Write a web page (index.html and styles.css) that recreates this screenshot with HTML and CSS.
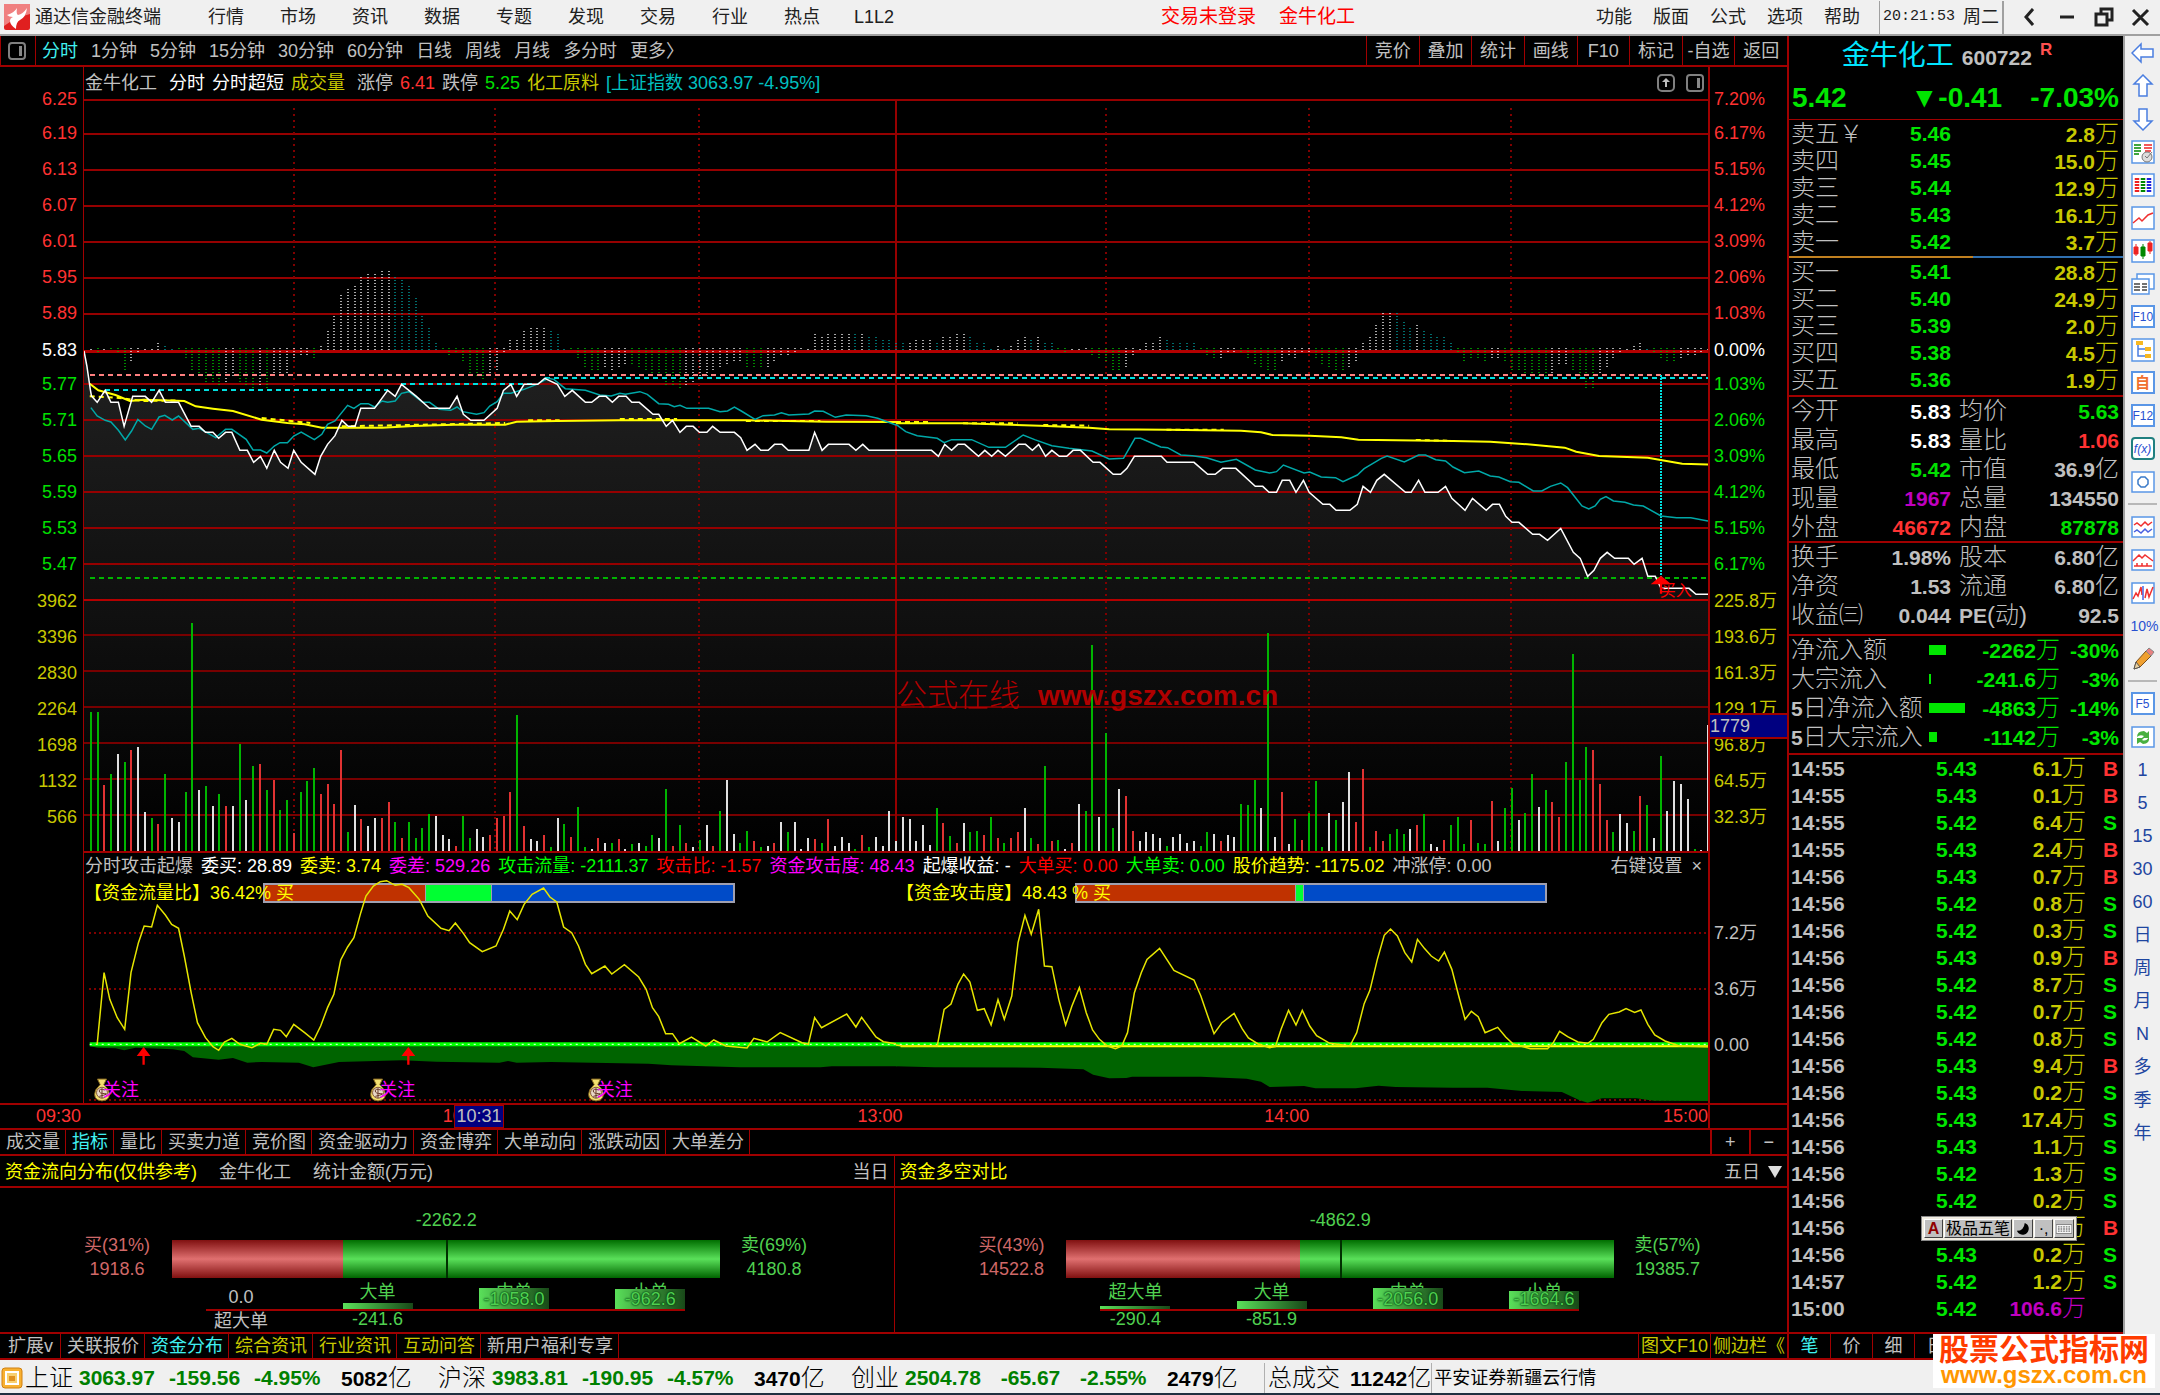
FILE: index.html
```html
<!DOCTYPE html>
<html lang="zh-CN">
<head>
<meta charset="utf-8">
<title>通达信金融终端 - 金牛化工 600722</title>
<link rel="stylesheet" href="styles.css">
</head>
<body>
<div class="app">
<header class="titlebar">
  <svg class="logo" viewBox="0 0 26 26"><rect width="26" height="26" rx="2" fill="#e02020"/><path d="M0 0h26v10q-14 3-26 12z" fill="#f08080"/><path d="M3 11q7-2 10-7-1 6 1 7 5-1 9-7-1 9-7 12-4 2-4 9-6-4-6-8 0-3 3-4-4 0-6-2z" fill="#fff"/></svg>
  <h1>通达信金融终端</h1>
  <nav class="menu">
    <button>行情</button><button>市场</button><button>资讯</button><button>数据</button><button>专题</button><button>发现</button><button>交易</button><button>行业</button><button>热点</button><button>L1L2</button>
  </nav>
  <p class="alert"><a href="#login">交易未登录</a><a href="#stock">金牛化工</a></p>
  <nav class="menu-right">
    <button>功能</button><button>版面</button><button>公式</button><button>选项</button><button>帮助</button>
  </nav>
  <p class="clock"><time>20:21:53</time><span>周二</span></p>
  <div class="win">
    <button aria-label="后退"><svg viewBox="0 0 20 20"><path d="M13 2L6 10l7 8" class="w"/></svg></button>
    <button aria-label="最小化"><svg viewBox="0 0 20 20"><path d="M3 10h14" class="w"/></svg></button>
    <button aria-label="还原"><svg viewBox="0 0 20 20"><path d="M2 7h11v11H2zM7 6V2h11v11h-4" class="w"/></svg></button>
    <button aria-label="关闭"><svg viewBox="0 0 20 20"><path d="M2 3l15 15M17 3L2 18" class="w"/></svg></button>
  </div>
</header>

<div class="body">
<main class="left">
  <div class="toolbar">
    <button class="dock" aria-label="侧栏"><svg viewBox="0 0 18 18"><rect x="1" y="1" width="16" height="16" rx="3" class="i"/><path d="M11 4h3v10h-3z" fill="#888"/></svg></button>
    <div class="periods">
      <button class="on">分时</button><button>1分钟</button><button>5分钟</button><button>15分钟</button><button>30分钟</button><button>60分钟</button><button>日线</button><button>周线</button><button>月线</button><button>多分时</button><button>更多〉</button>
    </div>
    <div class="tools">
      <button>竞价</button><button>叠加</button><button>统计</button><button>画线</button><button>F10</button><button>标记</button><button>-自选</button><button>返回</button>
    </div>
  </div>

  <section class="chart">
    <ul class="axis axis-l">
      <li>6.25</li><li>6.19</li><li>6.13</li><li>6.07</li><li>6.01</li><li>5.95</li><li>5.89</li><li class="wh">5.83</li><li class="gr">5.77</li><li class="gr">5.71</li><li class="gr">5.65</li><li class="gr">5.59</li><li class="gr">5.53</li><li class="gr">5.47</li><li class="ye">3962</li><li class="ye">3396</li><li class="ye">2830</li><li class="ye">2264</li><li class="ye">1698</li><li class="ye">1132</li><li class="ye">566</li>
    </ul>
    <div class="plots">
      <div class="legend">
        <span class="sp">金牛化工</span><span class="wh">分时</span><span class="wh">分时超短</span><span class="ye sp">成交量</span><span>涨停</span><span class="re">6.41</span><span>跌停</span><span class="gr">5.25</span><span class="ye">化工原料</span><span class="cy">[上证指数 3063.97 -4.95%]</span>
        <div class="legend-icons">
          <svg viewBox="0 0 18 18"><rect x="1" y="1" width="16" height="16" rx="4" class="i"/><path d="M9 4l4 4h-3v5H8V8H5z" fill="#bbb"/></svg>
          <svg viewBox="0 0 18 18"><rect x="1" y="1" width="16" height="16" rx="3" class="i"/><path d="M11 4h3v10h-3z" fill="#888"/></svg>
        </div>
      </div>
      <div class="pane price">
        <svg viewBox="0 -726 2834 1506" preserveAspectRatio="none">
          <defs><linearGradient id="fade" gradientUnits="userSpaceOnUse" x1="0" y1="100" x2="0" y2="780"><stop offset="0" stop-color="#1f1f1f"/><stop offset="1" stop-color="#101010"/></linearGradient></defs>
          <g id="area" fill="url(#fade)"></g>
          <path class="grid" d="M0-723H2834M0-622H2834M0-514H2834M0-406H2834M0-298H2834M0-190H2834M0-82H2834M0 130H2834M0 238H2834M0 346H2834M0 454H2834M0 562H2834M0 670H2834M1417-726V780"/>
          <path class="grid vdots" d="M366-700V780M718-700V780M1074-700V780M1783-700V780M2138-700V780M2491-700V780"/>
          <path class="base" d="M0 30H2834M0 777H2834"/>
          <g id="hist"></g>
          <path class="dash pink" d="M10 103H2834"/>
          <path class="dash aqua" d="M37 148H530M554 130H785M804 112H2834"/>
          <path class="dash lime" d="M10 711H2834"/>
          <path class="dots aqua" d="M2752 103V740"/>
          <g class="avg">
            <path transform="translate(-145)" d="M155 128L170 148 200 162 225 180 250 176 320 180 340 196 370 203 405 210 455 236 500 246 530 250 560 260 665 260 720 255 790 251 880 251 900 242 970 240 1080 238 1300 238 1440 242 1562 243"/>
            <path transform="translate(1389)" d="M28 247L145 247 280 254 365 260 400 265 500 266 630 269 665 274 685 282 750 284 805 289 835 296 1000 300 1065 302 1130 310 1195 320 1215 332 1255 345 1340 350 1370 359 1400 368 1447 371"/>
            <path class="avg-dots" transform="translate(-145)" d="M155 166L200 170 250 180 310 178M455 231L540 246M595 256L880 246M920 238L975 238M1080 234L1180 234M1300 240L1430 240"/>
            <path class="avg-dots" transform="translate(1389)" d="M28 243L90 243M145 247L240 247M285 252L365 254M500 266L600 266M935 297L990 299"/>
          </g>
          <g class="line index">
            <path transform="translate(-145)" d="M157 200L168 225 182 238 192 243 205 268 217 297 228 270 239 235 252 255 263 265 276 228 286 223 299 237 310 225 335 265 346 262 375 290 392 265 403 265 428 295 440 327 453 327 464 336 477 315 487 305 500 305 511 285 524 273 547 296 560 280 570 250 583 240 605 193 616 202 628 188 641 188 652 198 665 180 675 184 688 180 699 157 712 152 736 184 748 184 765 205 785 208 796 198 806 212 830 220 843 215 853 195 866 182 877 157 890 157 913 145 935 130 955 112 965 115 985 143 1020 148 1045 162 1065 165 1080 157 1090 160 1115 152 1128 160 1148 188 1165 190 1175 197 1185 193 1197 202 1235 202 1255 212 1268 210 1280 198 1292 210 1316 235 1330 224 1350 222 1362 215 1375 222 1410 219 1420 210 1435 211 1456 229 1475 222 1510 224 1530 232 1562 252"/>
            <path transform="translate(1389)" d="M28 250L45 272 65 284 100 292 112 305 125 296 160 296 190 319 219 319 250 282 270 296 300 314 330 322 370 330 400 354 425 352 445 292 455 292 490 318 502 320 525 342 545 344 570 350 595 364 622 355 655 387 680 396 692 392 704 372 740 396 750 393 770 408 795 410 808 422 833 402 845 383 875 352 885 345 915 363 940 342 952 342 970 356 987 360 1000 378 1020 395 1045 390 1065 405 1080 408 1100 422 1115 424 1140 450 1155 450 1170 436 1188 426 1200 440 1225 495 1237 504 1248 495 1257 475 1267 467 1280 480 1300 484 1315 492 1332 495 1363 525 1390 530 1415 530 1445 540"/>
          </g>
          <g id="last" class="line last">
            <path transform="translate(-145)" d="M145 30L150 75 156 145 158 165 168 184 182 148 192 184 205 184 215 256 230 166 252 166 263 184 276 148 287 184 310 184 332 256 346 256 357 274 370 274 380 292 392 274 403 274 417 328 430 328 441 364 453 346 464 382 477 328 488 364 501 382 511 328 524 364 548 400 558 346 570 310 583 284 595 238 606 256 618 256 628 202 652 202 675 148 688 166 699 130 725 166 748 202 783 202 796 166 807 220 820 238 843 238 866 202 877 148 890 130 900 166 913 130 937 130 949 112 971 130 984 166 997 148 1020 184 1031 184 1044 166 1056 166 1067 184 1078 166 1091 166 1101 184 1114 184 1138 220 1148 220 1161 256 1172 238 1185 274 1196 256 1208 256 1219 274 1232 274 1242 256 1255 274 1280 274 1291 290 1302 328 1316 310 1326 328 1339 328 1350 310 1363 310 1374 328 1410 328 1420 274 1433 328 1444 310 1480 310 1492 328 1504 310 1515 328 1562 328"/>
            <path transform="translate(1389)" d="M28 328L90 328 102 346 113 310 125 328 136 310 148 310 172 346 183 328 195 346 206 328 219 346 242 310 254 310 266 328 277 310 289 346 300 328 313 346 326 346 337 328 350 328 372 364 384 364 407 400 420 400 431 382 444 346 491 346 501 364 548 364 572 400 585 400 598 382 621 382 655 436 668 436 679 454 692 454 702 418 715 418 726 454 739 418 749 454 773 490 785 490 796 508 820 508 833 490 843 436 856 454 867 418 880 400 917 454 927 454 940 418 951 454 974 454 987 436 998 472 1021 508 1034 472 1058 508 1069 490 1081 490 1092 526 1103 544 1115 544 1139 580 1151 580 1165 598 1188 562 1210 634 1222 652 1235 706 1246 688 1257 652 1269 634 1282 652 1306 652 1316 670 1330 652 1340 706 1353 706 1363 742 1412 742 1424 760 1447 760"/>
          </g>
          <path d="M2734 730L2752 704 2770 730H2754V758H2750V730z" fill="#f00"/>
        </svg>
        <span class="buy-mark">买入</span>
      </div>
      <div class="pane volume">
        <svg viewBox="0 0 2834 750" preserveAspectRatio="none">
          <path class="grid dim" d="M0 102H2834M0 210H2834M0 318H2834M0 426H2834M0 534H2834M0 642H2834"/>
          <path class="grid" d="M1417 0V750"/>
          <path class="grid vdots" d="M366 0V750M718 0V750M1074 0V750M1783 0V750M2138 0V750M2491 0V750"/>
          <g id="vol"></g>
        </svg>
        <p class="stamp"><span>公式在线</span><b>www.gszx.com.cn</b></p>
      </div>
      <div class="pane flow-pane">
        <div class="legend ind">
          <span>分时攻击起爆</span><span class="wh">委买: 28.89</span><span class="yb">委卖: 3.74</span><span class="ma">委差: 529.26</span><span class="gb">攻击流量: -2111.37</span><span class="rb">攻击比: -1.57</span><span class="ma">资金攻击度: 48.43</span><span class="wh">起爆收益: -</span><span class="rb">大单买: 0.00</span><span class="gb">大单卖: 0.00</span><span class="yb">股价趋势: -1175.02</span><span>冲涨停: 0.00</span>
          <button class="set">右键设置</button><button class="x" aria-label="关闭指标">×</button>
        </div>
        <div class="gauges">
          <div class="gauge"><div class="track"><i class="buy" style="width:34.3%"></i><i class="mid" style="width:14.2%"></i></div><span>【资金流量比】36.42% 买</span></div>
          <div class="gauge"><div class="track"><i class="buy" style="width:46.5%"></i><i class="mid" style="width:2%"></i></div><span>【资金攻击度】48.43 % 买</span></div>
        </div>
        <svg class="ind-plot" viewBox="0 21 2834 750" preserveAspectRatio="none">
          <path class="grid hdots" d="M8 262H2834M8 429H2834M8 763H2834"/>
          <g fill="#006400">
            <path transform="translate(-145)" d="M155 596L155 600 168 605 200 607 215 613 235 605 300 610 320 615 335 634 380 641 405 636 430 650 455 648 520 650 545 664 590 648 700 643 760 647 870 650 885 645 900 650 960 648 1130 653 1170 658 1290 664 1430 664 1450 661 1564 661V596z"/>
            <path transform="translate(1389)" d="M28 596L28 661 95 664 280 665 355 670 372 686 400 697 430 696 440 692 560 692 640 698 665 707 680 723 740 720 760 727 830 727 870 719 900 723 1000 725 1060 725 1120 735 1190 738 1220 762 1235 770 1260 757 1320 757 1350 764 1447 765V596z"/>
          </g>
          <path class="zero" d="M10 595H2834"/>
          <path class="zero-dots" d="M10 595H2834"/>
          <path class="floor" d="M1425 601H2834"/>
          <g class="line flow-line">
            <path transform="translate(-145)" d="M168 595L180 380 190 460 203 515 216 550 227 380 240 290 250 240 263 243 273 178 287 207 298 235 310 247 320 330 332 440 343 530 357 575 370 602 380 613 390 588 403 577 417 595 438 605 453 592 464 595 476 550 488 553 498 572 511 535 530 560 546 582 558 540 570 485 581 445 593 342 605 303 616 275 628 200 637 150 650 120 662 107 673 104 688 118 700 115 712 125 730 160 745 210 768 247 782 254 793 231 807 262 818 290 840 317 864 300 877 250 888 195 901 221 913 175 927 145 947 126 958 153 970 168 982 243 996 260 1008 300 1020 355 1031 383 1054 360 1066 384 1088 356 1113 393 1126 430 1137 485 1148 512 1160 563 1172 563 1184 593 1205 573 1230 600 1244 582 1265 600 1302 606 1314 577 1337 588 1360 560 1398 590 1409 595 1420 515 1432 545 1476 504 1492 543 1502 514 1527 573 1540 587 1562 593"/>
            <path transform="translate(1389)" d="M28 597L40 600 100 600 112 490 124 474 136 415 146 384 157 408 170 493 182 488 194 537 206 461 217 520 230 450 241 290 253 208 264 265 277 190 287 360 300 362 312 460 324 537 335 480 348 425 360 500 371 552 383 580 397 600 411 608 422 600 432 560 444 440 456 380 466 340 488 307 513 373 548 402 560 450 572 510 583 563 597 530 618 502 632 548 643 576 660 594 680 605 690 602 700 550 713 493 726 537 737 493 750 540 762 569 785 592 820 600 832 560 845 473 855 433 868 340 880 268 891 249 903 270 916 320 928 348 938 280 950 307 962 330 975 345 985 318 998 370 1010 450 1021 520 1032 496 1044 512 1056 560 1078 544 1092 573 1105 594 1135 608 1165 608 1175 590 1186 556 1200 572 1218 588 1235 592 1245 580 1260 530 1272 505 1290 498 1302 488 1317 499 1328 492 1340 535 1352 567 1370 585 1395 600 1447 602"/>
          </g>
          <path d="M92 630L104 603 116 630H106V656H102V630zM554 630L566 603 578 630H568V656H564V630z" fill="#f00"/>
        </svg>
        <span class="note" style="left:0.5%"><svg viewBox="0 0 22 26"><g id="bag"><path d="M6 1h10l-3 6 5 6q4 11-7 12-11-1-7-12l5-6z" fill="#f2e070" stroke="#8a6a20"/><circle cx="11" cy="16" r="6" fill="#e8d8c8" stroke="#7a4a30"/><path d="M14 13q-6-2-6 1t6 3-6 3M11 11v11" fill="none" stroke="#6a3a28"/></g></svg>关注</span>
        <span class="note" style="left:17.5%"><svg viewBox="0 0 22 26"><use href="#bag"/></svg>关注</span>
        <span class="note" style="left:30.9%"><svg viewBox="0 0 22 26"><use href="#bag"/></svg>关注</span>
      </div>
    </div>
    <div class="axis-col">
      <ul class="axis axis-r">
        <li>7.20%</li><li>6.17%</li><li>5.15%</li><li>4.12%</li><li>3.09%</li><li>2.06%</li><li>1.03%</li><li class="wh">0.00%</li><li class="gr">1.03%</li><li class="gr">2.06%</li><li class="gr">3.09%</li><li class="gr">4.12%</li><li class="gr">5.15%</li><li class="gr">6.17%</li><li class="ye">225.8万</li><li class="ye">193.6万</li><li class="ye">161.3万</li><li class="ye">129.1万</li><li class="ye">96.8万</li><li class="ye">64.5万</li><li class="ye">32.3万</li>
      </ul>
      <ul class="axis axis-i"><li>7.2万</li><li>3.6万</li><li>0.00</li></ul>
      <span class="cursor-y">1779</span>
    </div>
  </section>

  <div class="times">
    <span>09:30</span><span>10:30</span><span>13:00</span><span>14:00</span><span>15:00</span><i></i>
    <b class="cursor-x">10:31</b>
  </div>

  <div class="tabs">
    <button>成交量</button><button class="on">指标</button><button>量比</button><button>买卖力道</button><button>竞价图</button><button>资金驱动力</button><button>资金博弈</button><button>大单动向</button><button>涨跌动因</button><button>大单差分</button>
    <div class="zoomers"><button aria-label="放大">+</button><button aria-label="缩小">−</button></div>
  </div>

  <div class="funds">
    <section class="fund">
      <header><h2>资金流向分布(仅供参考)</h2><span>金牛化工</span><span>统计金额(万元)</span><button>当日</button></header>
      <div class="fund-body">
        <p class="net">-2262.2</p>
        <p class="side in">买(31%)<br>1918.6</p>
        <div class="bar"><i style="width:31.2%"></i></div>
        <p class="side out">卖(69%)<br>4180.8</p>
        <ol class="sizes">
          <li class="flat"><em>0.0</em><span>超大单</span></li>
          <li><span>大单</span><i style="height:6px"></i><em>-241.6</em></li>
          <li class="tall"><span>中单</span><i style="height:21px"></i><em>-1058.0</em></li>
          <li class="tall"><span>小单</span><i style="height:20px"></i><em>-962.6</em></li>
        </ol>
      </div>
    </section>
    <section class="fund">
      <header><h2>资金多空对比</h2><button>五日 <svg viewBox="0 0 14 12"><path d="M0 0h14L7 12z" fill="#ddd"/></svg></button></header>
      <div class="fund-body">
        <p class="net">-4862.9</p>
        <p class="side in">买(43%)<br>14522.8</p>
        <div class="bar"><i style="width:42.6%"></i></div>
        <p class="side out">卖(57%)<br>19385.7</p>
        <ol class="sizes">
          <li><span>超大单</span><i style="height:3px"></i><em>-290.4</em></li>
          <li><span>大单</span><i style="height:8px"></i><em>-851.9</em></li>
          <li class="tall"><span>中单</span><i style="height:21px"></i><em>-2056.0</em></li>
          <li class="tall"><span>小单</span><i style="height:18px"></i><em>-1664.6</em></li>
        </ol>
      </div>
    </section>
  </div>

  <div class="tabs low">
    <button>扩展v</button><button>关联报价</button><button class="on">资金分布</button><button class="ye">综合资讯</button><button class="ye">行业资讯</button><button class="ye">互动问答</button><button>新用户福利专享</button>
    <div class="low-right"><button class="ye">图文F10</button><button class="ye">侧边栏《</button></div>
  </div>
</main>

<aside class="quote">
  <header class="q-name"><h2>金牛化工</h2><b>600722</b><sup>R</sup></header>
  <p class="q-last"><b>5.42</b><b>▼-0.41</b><b>-7.03%</b></p>
  <table class="book">
    <tbody>
      <tr><th>卖五￥</th><td>5.46</td><td><b>2.8</b>万</td></tr>
      <tr><th>卖四</th><td>5.45</td><td><b>15.0</b>万</td></tr>
      <tr><th>卖三</th><td>5.44</td><td><b>12.9</b>万</td></tr>
      <tr><th>卖二</th><td>5.43</td><td><b>16.1</b>万</td></tr>
      <tr><th>卖一</th><td>5.42</td><td><b>3.7</b>万</td></tr>
    </tbody>
  </table>
  <div class="ratio"><i style="width:55%"></i></div>
  <table class="book">
    <tbody>
      <tr><th>买一</th><td>5.41</td><td><b>28.8</b>万</td></tr>
      <tr><th>买二</th><td>5.40</td><td><b>24.9</b>万</td></tr>
      <tr><th>买三</th><td>5.39</td><td><b>2.0</b>万</td></tr>
      <tr><th>买四</th><td>5.38</td><td><b>4.5</b>万</td></tr>
      <tr><th>买五</th><td>5.36</td><td><b>1.9</b>万</td></tr>
    </tbody>
  </table>
  <table class="stats">
    <tbody>
      <tr><th>今开</th><td class="wh"><b>5.83</b></td><th>均价</th><td class="gr"><b>5.63</b></td></tr>
      <tr><th>最高</th><td class="wh"><b>5.83</b></td><th>量比</th><td class="re"><b>1.06</b></td></tr>
      <tr><th>最低</th><td class="gr"><b>5.42</b></td><th>市值</th><td><b>36.9</b>亿</td></tr>
      <tr><th>现量</th><td class="pu"><b>1967</b></td><th>总量</th><td><b>134550</b></td></tr>
      <tr><th>外盘</th><td class="re"><b>46672</b></td><th>内盘</th><td class="gr"><b>87878</b></td></tr>
    </tbody>
  </table>
  <table class="stats three">
    <tbody>
      <tr><th>换手</th><td><b>1.98%</b></td><th>股本</th><td><b>6.80</b>亿</td></tr>
      <tr><th>净资</th><td><b>1.53</b></td><th>流通</th><td><b>6.80</b>亿</td></tr>
      <tr><th>收益㈢</th><td><b>0.044</b></td><th class="pe"><b>PE</b>(动)</th><td><b>92.5</b></td></tr>
    </tbody>
  </table>
  <table class="netflow">
    <tbody>
      <tr><th>净流入额</th><td><i style="width:17px"></i></td><td><b>-2262</b>万</td><td><b>-30%</b></td></tr>
      <tr><th>大宗流入</th><td><i style="width:2px"></i></td><td><b>-241.6</b>万</td><td><b>-3%</b></td></tr>
      <tr><th><b>5</b>日净流入额</th><td><i style="width:36px"></i></td><td><b>-4863</b>万</td><td><b>-14%</b></td></tr>
      <tr><th><b>5</b>日大宗流入</th><td><i style="width:8px"></i></td><td><b>-1142</b>万</td><td><b>-3%</b></td></tr>
    </tbody>
  </table>
  <div class="ticks-wrap">
  <table class="ticks">
    <tbody>
      <tr><td>14:55</td><td>5.43</td><td>6.1<s>万</s></td><td class="b">B</td></tr>
      <tr><td>14:55</td><td>5.43</td><td>0.1<s>万</s></td><td class="b">B</td></tr>
      <tr><td>14:55</td><td>5.42</td><td>6.4<s>万</s></td><td>S</td></tr>
      <tr><td>14:55</td><td>5.43</td><td>2.4<s>万</s></td><td class="b">B</td></tr>
      <tr><td>14:56</td><td>5.43</td><td>0.7<s>万</s></td><td class="b">B</td></tr>
      <tr><td>14:56</td><td>5.42</td><td>0.8<s>万</s></td><td>S</td></tr>
      <tr><td>14:56</td><td>5.42</td><td>0.3<s>万</s></td><td>S</td></tr>
      <tr><td>14:56</td><td>5.43</td><td>0.9<s>万</s></td><td class="b">B</td></tr>
      <tr><td>14:56</td><td>5.42</td><td>8.7<s>万</s></td><td>S</td></tr>
      <tr><td>14:56</td><td>5.42</td><td>0.7<s>万</s></td><td>S</td></tr>
      <tr><td>14:56</td><td>5.42</td><td>0.8<s>万</s></td><td>S</td></tr>
      <tr><td>14:56</td><td>5.43</td><td>9.4<s>万</s></td><td class="b">B</td></tr>
      <tr><td>14:56</td><td>5.43</td><td>0.2<s>万</s></td><td>S</td></tr>
      <tr><td>14:56</td><td>5.43</td><td>17.4<s>万</s></td><td>S</td></tr>
      <tr><td>14:56</td><td>5.43</td><td>1.1<s>万</s></td><td>S</td></tr>
      <tr><td>14:56</td><td>5.42</td><td>1.3<s>万</s></td><td>S</td></tr>
      <tr><td>14:56</td><td>5.42</td><td>0.2<s>万</s></td><td>S</td></tr>
      <tr><td>14:56</td><td></td><td><s>万</s></td><td class="b">B</td></tr>
      <tr><td>14:56</td><td>5.43</td><td>0.2<s>万</s></td><td>S</td></tr>
      <tr><td>14:57</td><td>5.42</td><td>1.2<s>万</s></td><td>S</td></tr>
      <tr><td>15:00</td><td>5.42</td><td class="pu">106.6<s>万</s></td><td></td></tr>
    </tbody>
  </table>
  <div class="ime">
    <button class="a">A</button><button>极品五笔</button><button aria-label="半角"><svg viewBox="0 0 16 16"><path d="M10 1a7 7 0 1 1-9 9q8 0 9-9z" fill="#000"/></svg></button><button>·,</button><button aria-label="键盘"><svg viewBox="0 0 18 16"><rect y="3" width="18" height="10" fill="#fff" stroke="#777"/><path d="M2 5.500h14M2 8h14M2 10.500h14" stroke="#777" stroke-width="1.500" stroke-dasharray="2 1"/></svg></button>
  </div>
  </div>
  <nav class="q-tabs"><button class="on">笔</button><button>价</button><button>细</button><button>日</button><span></span><span></span><span></span><span></span></nav>
</aside>

<nav class="rail">
  <button aria-label="后退"><svg viewBox="0 0 24 24"><path d="M1 12l9-9v5h12v8H10v5z" fill="#fff" stroke="#4a7ee0" stroke-width="1.500"/></svg></button>
  <button aria-label="上"><svg viewBox="0 0 24 24"><path d="M12 1l9 9h-5v12H8V10H3z" fill="#fff" stroke="#4a7ee0" stroke-width="1.500"/></svg></button>
  <button aria-label="下"><svg viewBox="0 0 24 24"><path d="M12 23l9-9h-5V2H8v12H3z" fill="#fff" stroke="#4a7ee0" stroke-width="1.500"/></svg></button>
  <button aria-label="报价"><svg viewBox="0 0 24 24"><rect x="1" y="1" width="22" height="22" class="f"/><path d="M3 5h7M3 8h7M3 11h7M3 14h5" stroke="#080" stroke-width="1.500"/><path d="M13 5h8M13 8h8M14 11h6" stroke="#e22" stroke-width="1.500"/><circle cx="16" cy="17" r="5" fill="#ddd" stroke="#777"/><path d="M14 16l2 2 5-6" stroke="#777" fill="none"/></svg></button>
  <button aria-label="列表"><svg viewBox="0 0 24 24"><rect x="1" y="1" width="22" height="22" class="f"/><g fill="none" stroke-width="4.500" stroke-dasharray="2 1"><path d="M6 5v15" stroke="#e22"/><path d="M12 5v15" stroke="#080"/><path d="M18 5v15" stroke="#22d"/></g></svg></button>
  <button aria-label="走势"><svg viewBox="0 0 24 24"><rect x="1" y="1" width="22" height="22" class="f"/><path d="M2 17l6-5 3 3 6-6 5-2" class="r"/></svg></button>
  <button aria-label="K线"><svg viewBox="0 0 24 24"><rect x="1" y="1" width="22" height="22" class="f"/><path d="M3 8h4v7H3zM5 5v12M17 4h4v8h-4zM19 2v13" fill="#e22" stroke="#e22"/><path d="M10 8h4v9h-4zM12 5v15" fill="#080" stroke="#080"/></svg></button>
  <button aria-label="多窗"><svg viewBox="0 0 24 24"><rect x="6" y="2" width="17" height="15" class="f"/><rect x="1" y="7" width="17" height="15" class="f"/><path d="M3 12h6M3 15h6M3 18h6M11 12h5M11 15h5M11 18h5" stroke="#444" stroke-width="1.500"/></svg></button>
  <button class="t">F10</button>
  <button aria-label="树"><svg viewBox="0 0 24 24"><rect x="1" y="1" width="22" height="22" class="f"/><path d="M7 6v12h7M7 11h7" stroke="#4a7ee0" fill="none" stroke-width="1.500"/><path d="M5 3h7v4H5zM14 9h6v4h-6zM14 16h6v4h-6z" fill="#f8b820"/></svg></button>
  <button class="t zi">自</button>
  <button class="t">F12</button>
  <button class="t fx">f(x)</button>
  <button aria-label="圆"><svg viewBox="0 0 24 24"><rect x="1" y="2" width="22" height="20" class="f"/><path d="M10 7h4l3 3v4l-3 3h-4l-3-3v-4z" fill="none" stroke="#3a7ac8" stroke-width="1.500"/></svg></button>
  <hr>
  <button aria-label="叠加"><svg viewBox="0 0 24 24"><rect x="1" y="2" width="22" height="20" class="f"/><path d="M3 10l3-2 4 3 4-4 3 3 4-3" class="r"/><path d="M3 17l3-2 4 3 4-4 3 3 4-3" class="u"/></svg></button>
  <button aria-label="副图"><svg viewBox="0 0 24 24"><rect x="1" y="2" width="22" height="20" class="f"/><path d="M2 13l6-6 3 3 3-3 8 6M3 18h18M6 15v3M11 15v3M16 15v3" class="r"/></svg></button>
  <button aria-label="波动"><svg viewBox="0 0 24 24"><rect x="1" y="2" width="22" height="20" class="f"/><path d="M2 18l3-6 2 3 3-9 1 8M14 17l2-9 2 8 4-10" class="r"/><path d="M12 5v14" class="u"/></svg></button>
  <button class="t pct">10%</button>
  <button aria-label="画笔"><svg viewBox="0 0 24 24"><path d="M3 22l2-7L15 4l5 5L9 20z" fill="#f0a030" stroke="#7a5020"/><path d="M15 4l3-3 5 4-3 4z" fill="#e88080" stroke="#888"/><path d="M3 22l2-7 4 5z" fill="#e8d0a0" stroke="#555"/></svg></button>
  <hr>
  <button class="t">F5</button>
  <button aria-label="刷新"><svg viewBox="0 0 24 24"><rect x="1" y="2" width="22" height="20" class="f"/><path d="M6 12q0-6 7-6l3 2 2-2v7h-7l2-2q-4-2-7 1zM18 12q1 7-6 7l-3-2-3 2v-6h7l-2 2q4 2 7-3z" fill="#48b040"/></svg></button>
  <button>1</button><button>5</button><button>15</button><button>30</button><button>60</button><button>日</button><button>周</button><button>月</button><button>N</button><button>多</button><button>季</button><button>年</button>
</nav>
</div>

<footer class="status">
  <svg class="coin" viewBox="0 0 22 22"><rect x="1" y="1" width="20" height="20" rx="3" fill="#f8b030" stroke="#d08010"/><rect x="5" y="5" width="12" height="12" fill="#f8d070" stroke="#fff" stroke-width="2"/><rect x="8" y="9" width="6" height="5" fill="#e09020"/></svg>
  <p class="idx"><span>上证</span><b>3063.97</b><b>-159.56</b><b>-4.95%</b><span><strong>5082</strong>亿</span></p>
  <p class="idx"><span>沪深</span><b>3983.81</b><b>-190.95</b><b>-4.57%</b><span><strong>3470</strong>亿</span></p>
  <p class="idx"><span>创业</span><b>2504.78</b><b>-65.67</b><b>-2.55%</b><span><strong>2479</strong>亿</span></p>
  <p class="total"><span>总成交</span><span><strong>11242</strong>亿</span></p>
  <p class="server">平安证券新疆云行情</p>
</footer>
<div class="brand"><strong>股票公式指标网</strong><b>www.gszx.com.cn</b></div>
</div>
<script src="chart.js"></script>
</body>
</html>
```

FILE: styles.css
```css
* { box-sizing: border-box; }
body { margin: 0; background: #000; color: #c0c0c0; font: 400 18px/24px "Liberation Sans", "Noto Sans CJK SC", sans-serif; }
h1, h2, p, ul, ol { margin: 0; padding: 0; font-size: inherit; font-weight: inherit; list-style: none; }
button { background: none; border: 0; padding: 0; margin: 0; font: inherit; color: inherit; white-space: nowrap; }
a { color: inherit; text-decoration: none; }
b, strong { font-weight: 700; }
i, em { font-style: normal; }
s { text-decoration: none; }
svg { display: block; }
.wh { color: #fff; }
.gr { color: #00e000; }
.re { color: #ff3232; }
.ye { color: #c8c800; }
.cy { color: #00c0c0; }
.pu { color: #c000c0; }
.ma { color: #f0f; }
.yb { color: #ff0; }
.gb { color: #0f0; }
.rb { color: #f00; }

.app { position: relative; min-height: 100vh; display: flex; flex-direction: column; }
.titlebar { display: flex; align-items: center; height: 36px; background: #f0f0f0; border-bottom: 2px solid #a0a0a0; color: #202020; }
.logo { width: 26px; height: 26px; margin: 0 5px 0 4px; }
.menu { display: flex; margin-left: 29px; }
.menu button { width: 72px; }
.alert { display: flex; gap: 23px; margin-left: 251px; color: #f00; font-size: 19px; }
.menu-right { display: flex; gap: 21px; margin-left: auto; padding-right: 19px; }
.clock { display: flex; gap: 8px; height: 33px; padding: 0 3px; align-items: center; border: 1px solid #a0a0a0; border-width: 0 2px 0 1px; }
.clock time { font: 15px/24px "Liberation Mono", monospace; }
.win { display: flex; gap: 17px; padding: 0 9px 0 16px; }
.win svg { width: 20px; height: 20px; }
.w { fill: none; stroke: #222; stroke-width: 3; }
.i { fill: none; stroke: #808080; stroke-width: 2; }

.body { display: grid; grid-template-columns: minmax(0, 1fr) 336px 37px; }
.left { display: flex; flex-direction: column; min-width: 0; }
.toolbar { display: flex; height: 31px; border-bottom: 2px solid #a00000; }
.dock { width: 36px; padding-left: 7px; border: 1px solid #a00000; border-width: 0 1px; }
.dock svg { width: 18px; height: 18px; }
.periods { display: flex; align-items: center; gap: 13px; padding-left: 6px; }
.on { color: #40f0f0; }
.tools { display: grid; grid-template-columns: repeat(8, 1fr); width: 421px; margin-left: auto; }
.tools button { border-left: 1px solid #a00000; }

.chart { display: grid; grid-template-columns: 83px minmax(0, 1fr) 77px; }
.plots { border: 1px solid #a00000; border-width: 0 2px 0 1px; min-width: 0; }
.axis { display: grid; color: #ff3232; line-height: 28px; }
.axis-l, .axis-r { grid-template-rows: 34px repeat(5, 36px) 37px 34px repeat(5, 36px) 37px repeat(6, 36px) 28px; align-content: start; }
.axis-l { padding-top: 18px; padding-right: 6px; text-align: right; }
.axis-r { padding-top: 18px; padding-left: 4px; }
.axis-col { position: relative; }
.axis-i { grid-template-rows: 56px 56px 28px; margin-top: 88px; padding-left: 4px; color: #c0c0c0; }
.cursor-y { position: absolute; left: 0; right: 0; top: 646px; height: 26px; line-height: 22px; background: #000080; border: 1px solid #a00000; border-width: 2px 0; }
.legend { display: flex; align-items: center; gap: 7px; height: 32px; padding-left: 1px; white-space: nowrap; }
.sp { margin-right: 5px; }
.legend-icons { display: flex; gap: 11px; margin: 0 4px 0 auto; }
.legend-icons svg { width: 18px; height: 18px; }
.pane { position: relative; }
.pane > svg { width: 100%; }
.price > svg { height: 502px; }
.volume { background: linear-gradient(#111, #000); }
.volume > svg { height: 250px; }
.pane path { vector-effect: non-scaling-stroke; }
.grid { fill: none; stroke: #960000; stroke-width: 2; shape-rendering: crispEdges; }
.dim { stroke: #780000; }
.vdots { stroke-dasharray: 2 4; stroke: #800000; }
.hdots { stroke-dasharray: 2 3; stroke: #800000; }
.base { stroke: #b40000; stroke-width: 3; shape-rendering: crispEdges; }
.dash { stroke-width: 2; stroke-dasharray: 5 4; shape-rendering: crispEdges; }
.dots { stroke-width: 2; stroke-dasharray: 2 1; shape-rendering: crispEdges; }
.pink { stroke: #ff8080; }
.aqua { stroke: #00e0e0; }
.lime { stroke: #00b400; }
.line { fill: none; stroke-width: 1.500; }
.last { stroke: #fff; }
.index { stroke: #00a8a8; }
.flow-line { stroke: #e6e600; }
.avg { fill: none; stroke: #ff0; stroke-width: 2; }
.avg-dots { stroke-width: 2; stroke-dasharray: 5 4; }
.bars { fill: none; stroke-width: 2; shape-rendering: crispEdges; }
.faint { stroke-dasharray: 1 2; opacity: 0.75; }
.c-w { stroke: #e0e0e0; }
.c-g { stroke: #00b400; }
.c-r { stroke: #e03232; }
.c-c { stroke: #009090; }
.buy-mark { position: absolute; right: 1%; bottom: 0; color: #f00; font-size: 16px; line-height: 20px; }
.stamp { position: absolute; left: 50%; top: 76px; display: flex; gap: 18px; color: #b00000; font-size: 31px; font-weight: 300; line-height: 38px; white-space: pre; }
.stamp b { font-size: 28px; }
.flow-pane { display: grid; grid-template-rows: 26px 28px 196px; border-top: 2px solid #a00000; }
.ind { grid-area: 1 / 1; height: 26px; gap: 8px; }
.set { margin-left: auto; }
.x { margin: 0 6px 0 1px; }
.gauges { grid-area: 2 / 1; display: grid; grid-template-columns: 1fr 1fr; color: #ff0; }
.gauge { display: grid; align-items: center; }
.gauge > * { grid-area: 1 / 1; white-space: pre; }
.track { display: flex; height: 20px; margin-left: 22%; width: 58.200%; background: #004bc8; border: 2px solid #a0a0b0; }
.buy { background: #c03200; }
.mid { background: #00ff32; border: 1px solid #a0a0b0; border-width: 0 1px; }
.flow-pane > .ind-plot { grid-area: 1 / 1 / 4 / 2; height: 250px; }
.zero { stroke: #0f0; stroke-width: 4; }
.zero-dots { stroke: #fff; stroke-width: 1; stroke-dasharray: 2 4; }
.floor { stroke: #ff0; stroke-width: 2; }
.note { position: absolute; bottom: 0; display: flex; align-items: center; color: #f0f; }
.note svg { width: 20px; height: 26px; margin-right: -9px; }

.times { position: relative; display: grid; grid-template-columns: 83px repeat(4, 1fr) 77px; height: 27px; border: 2px solid #a00000; border-width: 2px 0; color: #ff3232; text-align: right; }
.times span { padding-right: 2px; line-height: 22px; }
.times span:nth-child(3), .times span:nth-child(4) { margin-right: -8px; }
.times i { border-left: 2px solid #a00000; margin-left: -2px; }
.cursor-x { position: absolute; left: 454px; top: 0; width: 50px; height: 23px; color: #c0c0c0; background: #000080; font-weight: 400; text-align: center; line-height: 21px; border: 1px solid #a00000; }
.tabs { display: flex; height: 26px; border-bottom: 2px solid #a00000; }
.tabs > button { padding: 0 5px 0 6px; border-right: 1px solid #a00000; line-height: 24px; }
.zoomers { display: grid; grid-template-columns: 1fr 1fr; width: 77px; margin-left: auto; }
.zoomers button { border-left: 2px solid #a00000; }

.funds { display: grid; grid-template-columns: 1fr 1fr; border-bottom: 2px solid #a00000; }
.fund + .fund { border-left: 1px solid #a00000; }
.fund header { display: flex; gap: 22px; height: 32px; padding: 1px 5px 0; align-items: center; border-bottom: 2px solid #a00000; }
.fund h2 { color: #ff0; }
.fund header button { display: flex; align-items: center; gap: 8px; margin-left: auto; }
.fund header svg { width: 14px; height: 12px; }
.fund-body { display: grid; grid-template-columns: 172fr 548fr 173fr; grid-template-rows: 26px 38px 54px; row-gap: 6px; height: 144px; padding-top: 20px; }
.net { grid-area: 1 / 2; text-align: center; color: #50d050; }
.side { grid-row: 2; line-height: 24px; margin-top: -7px; text-align: center; }
.in { grid-column: 1; color: #d06868; padding-left: 62px; }
.out { grid-column: 3; color: #50d050; padding-right: 66px; }
.bar { grid-area: 2 / 2; display: flex; position: relative; background: linear-gradient(#006e00, #5ae05a, #006400); }
.bar i { background: linear-gradient(#801010, #e07070, #801010); }
.bar::after { content: ""; position: absolute; left: 50%; top: 0; bottom: 0; width: 2px; background: #003000; }
.sizes { grid-area: 3 / 2; display: grid; grid-template-columns: repeat(4, 70px); justify-content: space-between; margin: -6px 35px 0 34px; background: linear-gradient(#a00000, #a00000) 0 31px / 100% 2px no-repeat; color: #50d050; text-align: center; }
.sizes li { display: grid; grid-template-rows: 31px 24px; white-space: nowrap; justify-items: center; }
.sizes span { grid-area: 1 / 1; line-height: 28px; }
.sizes i { grid-area: 1 / 1; align-self: end; width: 70px; background: linear-gradient(90deg, #5ae05a, #184818); }
.sizes em { grid-area: 2 / 1; line-height: 20px; }
.sizes .flat { color: #c0c0c0; }
.sizes .flat em { grid-area: 1 / 1; line-height: 38px; }
.sizes .flat span { grid-area: 2 / 1; line-height: 24px; }
.sizes .tall em { grid-area: 1 / 1; align-self: end; text-shadow: 0 0 2px #004010, 0 0 2px #004010; }
.low > button { line-height: 25px; }
.low > button:first-child { width: 61px; }
.low-right { display: flex; margin-left: auto; }
.low-right button { border-left: 1px solid #a00000; padding: 0 2px; }
.low-right button + button { width: 77px; text-align: left; }

.quote { display: flex; flex-direction: column; border: 1px solid #a00000; border-width: 0 0 0 2px; color: #c0c0c0; }
.quote b { font-size: 21px; }
.q-name { display: flex; justify-content: center; height: 36px; line-height: 40px; padding-right: 18px; }
.q-name h2 { color: #00e5ff; font-size: 28px; font-weight: 400; }
.q-name b { margin: 2px 8px 0 8px; }
.q-name sup { color: #ff5050; font: 700 17px/28px "Liberation Sans", sans-serif; }
.q-last { display: flex; justify-content: space-between; height: 48px; padding: 5px 4px 0 3px; align-items: center; color: #00e600; border-bottom: 1px solid #a00000; }
.q-last b { font-size: 28px; }
.q-last b:first-child { margin-right: 36px; }
table { border-collapse: collapse; width: 100%; table-layout: fixed; }
th, td { padding: 0; font-weight: 300; white-space: nowrap; }
th { text-align: left; font-size: 24px; }
table b, table s { line-height: 0; }
.book tr { height: 27px; line-height: 26px; }
.book { margin-bottom: 1px; }
.book th { width: 121px; padding-left: 2px; }
.book td { color: #00e600; font-size: 21px; font-weight: 700; }
.book td:last-child { color: #c8c800; font-size: 24px; font-weight: 300; text-align: right; padding-right: 4px; }
.ratio { height: 2px; background: #3070b0; }
.ratio i { display: block; height: 2px; background: #c08020; }
.ratio + .book { margin-bottom: 2px; }
.stats { border-top: 2px solid #a00000; }
.stats tr { height: 29px; line-height: 28px; }
.stats th:first-child { width: 84px; padding-left: 2px; }
.stats td { font-size: 24px; text-align: right; }
.stats td:nth-child(2) { width: 78px; }
.stats th:nth-child(3) { width: 74px; padding-left: 8px; }
.stats td:last-child { padding-right: 4px; }
.three { margin-bottom: 5px; }
.netflow { margin-bottom: 2px; border-top: 2px solid #a00000; }
.netflow tr { height: 29px; line-height: 28px; }
.netflow th { width: 140px; padding-left: 2px; }
.netflow td { text-align: right; color: #00e600; font-size: 24px; padding-right: 4px; }
.netflow td:nth-child(2) { width: 38px; padding: 0; }
.netflow td:nth-child(3) { width: 93px; padding: 0; }
.netflow i { display: block; height: 10px; background: #00e600; }
.ticks-wrap { position: relative; flex: 1; min-height: 570px; border-top: 2px solid #a00000; }
.ticks tr { height: 27px; line-height: 26px; }
.ticks td { font-size: 21px; font-weight: 700; }
.ticks td:nth-child(1) { width: 147px; padding-left: 2px; }
.ticks td:nth-child(2) { width: 60px; color: #00e600; }
.ticks td:nth-child(3) { width: 90px; color: #c8c800; text-align: right; }
.ticks td.pu { color: #c000c0; }
.ticks s { font-size: 24px; font-weight: 300; }
.ticks td:nth-child(4) { color: #00e600; padding-left: 17px; }
.ticks td.b { color: #ff3232; }
.ime { position: absolute; left: 132px; top: 461px; display: flex; gap: 1px; padding: 2px; height: 25px; background: #f0ece0; border: 1px solid #888; color: #000; font-size: 16px; line-height: 18px; }
.ime button { min-width: 19px; background: #c0c0c0; border: 1px solid #fff; border-right-color: #404040; border-bottom-color: #404040; padding: 0 1px; }
.ime svg { width: 16px; height: 14px; }
.ime .a { color: #900000; font-weight: 700; }
.q-tabs { display: grid; grid-template-columns: repeat(8, 42px); height: 28px; border: 2px solid #a00000; border-width: 2px 0; overflow: hidden; }
.q-tabs > * { border-right: 1px solid #a00000; line-height: 24px; }

.rail { background: #f0f0f0; border-left: 2px solid #a0a0a0; color: #1e46a0; display: flex; flex-direction: column; }
.rail button { height: 33px; display: grid; place-items: center; }
.rail svg { width: 24px; height: 24px; }
.rail hr { width: 29px; height: 2px; margin: 5px auto; border: 0; background: #b8b8b8; }
.f { fill: #fff; stroke: #5a96e6; stroke-width: 1.500; }
.r { fill: none; stroke: #f03030; stroke-width: 1.500; }
.u { fill: none; stroke: #4a60e0; stroke-width: 1.500; }
.rail .t { width: 24px; height: 23px; margin: 5px auto; background: #fff; border: 2px solid #5a96e6; font-size: 12px; line-height: 18px; color: #2850d0; }
.rail .zi { color: #f07030; font-weight: 700; font-size: 15px; }
.rail .fx { border-color: #208080; border-radius: 4px; font-style: italic; }
.rail .pct { background: none; border: 0; font-size: 14px; }

.status { display: flex; align-items: center; height: 35px; padding-top: 2px; background: #f0f0f0; border-bottom: 2px solid #203040; color: #000; font-size: 24px; font-weight: 300; line-height: 30px; white-space: nowrap; }
.coin { width: 22px; height: 22px; margin: 0 2px 0 1px; }
.idx { display: grid; grid-template-columns: 54px 84px 83px 95px 97px; }
.status b { color: #008000; font-size: 21px; }
.status strong { font-size: 21px; line-height: 0; }
.idx b:nth-child(3) { text-align: center; }
.idx b:nth-child(4) { padding-left: 8px; }
.total { display: flex; gap: 10px; border-left: 1px solid #b0b0b0; padding-left: 3px; }
.server { font-size: 18px; font-weight: 400; border-left: 1px solid #b0b0b0; padding-left: 2px; }
.brand { position: absolute; right: 5px; bottom: 7px; width: 222px; height: 54px; background: #fff; text-align: center; display: grid; grid-template-rows: 32px 22px; }
.brand strong { color: #ff3c00; font-size: 30px; line-height: 32px; }
.brand b { color: #ff9600; font-size: 24px; line-height: 18px; }
```

FILE: chart.js
```js
// One entry per trading minute: colour letter followed by a value.
const STEP = 11.81, NOON = 1417;

const volume = [
  'g333 g333 r553 g518 w460 g482 r446 w437 w632 g650 r670 g518 w650 w662 g572 g65 w568 g554 w616 g580 r614 w614 g428 w596 g496 r490 g568 r536 g626 g596 r697 g572 g541 g500 r580 r550 r608 r446 g694 w613 r653 w676 w650 r650 r604 g662 r712 g662 g712 g680 g640 w644 w703 w715 r735 g644 g712 w685 w707 r703 r650 r644 r572 g343 r676 w715 w721 r703 g739 w650 g668 r708 g617 g739 w743 r712 w725 g725 r715 w743 g730 w725 g735 g703 w712 g563 r735 g671 r725 w739 g717 w671 r735 g631 w536 w698 g725 g689 r721 g739 w735 r725 w662 g694 w662 w743 w712 r715 g725 r653 w735 w708 w725 g743 r703 g739 w707 w735 w631 w721',
  'w649 w653 w721 w671 w731 g622 r667 g704 r725 w667 g694 g689 r703 g649 r712 g725 r712 r694 w622 g712 r730 g496 r721 g716 w743 r725 w608 g631 g131 w649 g397 g680 w563 r586 r689 w721 w694 w699 w712 g735 w708 w699 w725 w721 g735 g694 w699 r721 w703 w708 g608 g613 g536 w622 g95 w708 r572 w730 g653 r716 g635 g541 g739 w635 g658 w604 w514 r662 r505 g739 r689 r721 g699 g685 g699 w685 r671 g640 w730 w739 r716 g671 g649 g730 r658 g725 g730 r599 w721 g622 g560 w658 g635 g518 w617 g568 r604 r649 g482 g158 g536 g437 r446 r550 r658 g694 w640 w667 g689 r586 g613 w712 g464 w631 w541 w550 w595 g743 w748 w373'
];

const momentum = [
  'w5 g-6 w8 g-3 g-10 g-58 w-32 w-10 w3 w5 w25 c15 c10 g0 g-25 g-60 g-80 g-95 g-100 g-108 w-95 w-82 g-100 g-106 g-117 w-108 g-115 w-82 w-70 w-70 w-28 w-15 w-18 g-22 w15 w60 w105 w165 w190 w195 w222 w232 w228 w237 w240 c222 c217 c197 c155 c108 c65 c27 g0 g-18 g-10 g-35 g-70 g-80 g-88 w-80 w-60 w-8 w35 w35 w58 w68 w68 w70 c62 c48 c10 g0 g-25 g-50 g-62 g-62 w-52 w-62 w-50 w-45 g-48 g-50 g-62 g-75 g-80 g-105 g-108 g-117 w-108 w-95 w-88 w-82 w-65 w-55 w-45 w-38 w-38 g-52 g-55 g-52 w-50 w-32 w-15 w-15 w-8 w-3 w3 w52 w42 w48 w55 w55 w55 c48 w52 c42 c38 c32 c32 c28',
  'c25 w28 w35 w35 w35 c20 w38 w38 w47 w50 c42 c25 c25 c10 w15 c8 w15 w35 w42 c35 w42 c20 c20 g-3 g-6 w3 w8 w0 g-17 g-28 g-35 g-58 g-65 w-52 w-20 w10 w25 w28 w42 c35 c25 c25 c20 c20 g0 g-18 g-28 w-22 w-12 w-8 g-8 g-28 g-45 g-55 g-62 g-65 w-38 w-20 w-28 w-5 w-10 g-28 g-45 g-50 g-58 g-58 w-52 w-35 w20 w42 w82 w115 w118 c110 c88 c70 w80 c60 c47 c38 c42 c20 g-6 g-35 g-28 g-30 g-38 w-30 w-25 g-38 g-60 g-62 g-75 g-83 g-88 g-92 w-75 w-48 w-48 g-65 g-85 g-120 g-120 w-75 w-50 w-30 w-10 w8 w15 w28 c10 g-5 g-30 g-38 g-38 w-30 w-20 w-20 w-10 w3'
];

function draw(id, sessions, from, to, extra) {
  const paths = {};
  sessions.forEach((text, half) => {
    text.split(' ').forEach((item, i) => {
      const x = (half * NOON + (i + 1) * STEP).toFixed(1);
      const v = Number(item.slice(1));
      paths[item[0]] = (paths[item[0]] || '') + `M${x} ${from(v)}V${to(v)}`;
    });
  });
  const group = document.getElementById(id);
  Object.keys(paths).forEach(colour => {
    const path = document.createElementNS('http://www.w3.org/2000/svg', 'path');
    path.setAttribute('class', `bars c-${colour} ${extra}`);
    path.setAttribute('d', paths[colour]);
    group.appendChild(path);
  });
}

// The shaded area is the price line closed down to the bottom of its pane.
document.querySelectorAll('#last path').forEach(line => {
  const shade = line.cloneNode();
  const d = line.getAttribute('d');
  const start = d.slice(1).split(' ')[0];
  shade.setAttribute('d', `${d}V780H${start}z`);
  document.getElementById('area').appendChild(shade);
});

draw('vol', volume, () => 749, v => v, '');
draw('hist', momentum, v => (v > 0 ? 27 : 20), v => (v > 0 ? 27 - v : 28 - v), 'faint');
```
